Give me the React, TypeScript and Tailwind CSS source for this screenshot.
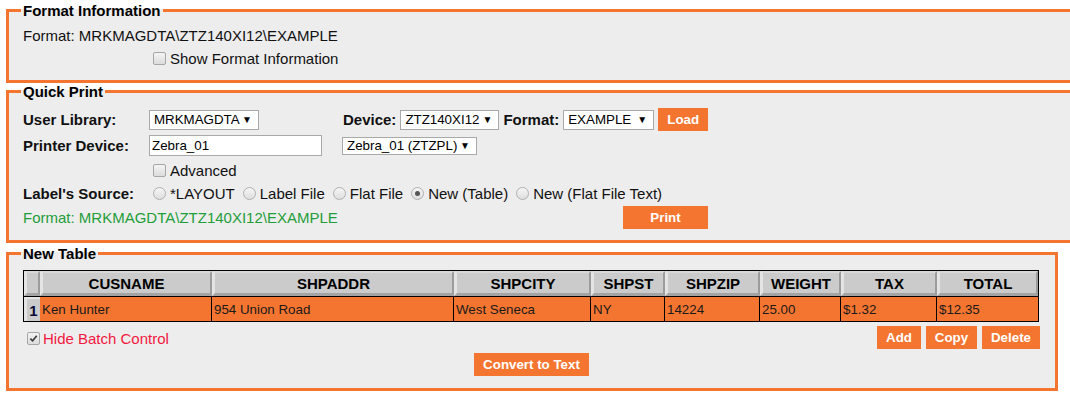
import { ReactNode } from "react";

const font = { fontFamily: '"Liberation Sans", Arial, sans-serif' };

function Box({ checked = false }: { checked?: boolean }) {
  return (
    <span className="relative inline-flex h-[13px] w-[13px] shrink-0 items-center justify-center rounded-[2px] border border-[#a6a6a6] bg-gradient-to-b from-[#f4f4f4] to-[#dcdcdc]">
      {checked && (
        <svg viewBox="0 0 10 10" className="h-[9px] w-[9px]">
          <path d="M1.5 5.2 L4 7.6 L8.6 2" fill="none" stroke="#3a3a3a" strokeWidth="1.8" />
        </svg>
      )}
    </span>
  );
}

function Radio({ checked = false }: { checked?: boolean }) {
  return (
    <span className="inline-flex h-[13px] w-[13px] shrink-0 items-center justify-center rounded-full border border-[#b0b0b0] bg-gradient-to-b from-[#f6f6f6] to-[#dedede]">
      {checked && <span className="h-[5px] w-[5px] rounded-full bg-[#555]" />}
    </span>
  );
}

function Select({ value, w, h = "h-[20px]" }: { value: string; w: string; h?: string }) {
  return (
    <span
      className={`inline-flex ${w} ${h} items-center justify-between border border-[#a9a9a9] bg-white pl-[4px] pr-[6px] text-[13.33px] text-black`}
    >
      <span>{value}</span>
      <span className="text-[10px] leading-none">▼</span>
    </span>
  );
}

function Btn({ children, w, h = "h-[23px]" }: { children: ReactNode; w: string; h?: string }) {
  return (
    <button
      className={`${w} ${h} shrink-0 bg-[#f47530] text-[13.33px] font-bold leading-none text-white`}
    >
      {children}
    </button>
  );
}

function Fieldset({ title, className, children }: { title: string; className: string; children: ReactNode }) {
  return (
    <fieldset className={`border-[3px] border-[#f47530] bg-[#ededed] pl-[14px] pr-[15px] ${className}`}>
      <legend className="-ml-[2px] px-[2px] text-[15px] font-bold leading-[17px] text-black">{title}</legend>
      {children}
    </fieldset>
  );
}

const columns = ["CUSNAME", "SHPADDR", "SHPCITY", "SHPST", "SHPZIP", "WEIGHT", "TAX", "TOTAL"];
const row = ["Ken Hunter", "954 Union Road", "West Seneca", "NY", "14224", "25.00", "$1.32", "$12.35"];

const bevel =
  "border-t-[2px] border-l-[3px] border-r-[2px] border-b-[3px] border-t-[#d8d8d8] border-l-[#e4e4e4] border-r-[#9c9c9c] border-b-[#a4a4a4] bg-[#cbcbcb]";

export default function App() {
  return (
    <div className="h-[406px] w-[1070px] overflow-hidden bg-white text-[15px] leading-[17px] text-[#111]" style={font}>
      <Fieldset title="Format Information" className="ml-[6px] mt-[2px] w-[1100px] pb-[13px] pt-[8px]">
        <div>Format: MRKMAGDTA\ZTZ140XI12\EXAMPLE</div>
        <div className="mt-[6px] flex items-center pl-[130px]">
          <Box />
          <span className="ml-[4px]">Show Format Information</span>
        </div>
      </Fieldset>

      <Fieldset title="Quick Print" className="ml-[6px] w-[1100px] pb-[11px] pt-[8px]">
        <div className="flex h-[23px] items-center">
          <span className="w-[126px] font-bold">User Library:</span>
          <span className="w-[194px]">
            <Select value="MRKMAGDTA" w="w-[110px]" />
          </span>
          <span className="font-bold">Device:</span>
          <span className="ml-[4px]">
            <Select value="ZTZ140XI12" w="w-[99px]" />
          </span>
          <span className="ml-[4px] font-bold">Format:</span>
          <span className="ml-[4px]">
            <Select value="EXAMPLE" w="w-[91px]" />
          </span>
          <span className="ml-[4px]">
            <Btn w="w-[50px]">Load</Btn>
          </span>
        </div>
        <div className="mt-[4px] flex h-[21px] items-center">
          <span className="w-[126px] font-bold">Printer Device:</span>
          <span className="w-[193px]">
            <span className="flex h-[21px] w-[173px] items-center border border-[#a9a9a9] bg-white pl-[2px] text-[13.33px] text-black">
              Zebra_01
            </span>
          </span>
          <Select value="Zebra_01 (ZTZPL)" w="w-[135px]" h="h-[18px]" />
        </div>
        <div className="mt-[6px] flex h-[17px] items-center pl-[130px]">
          <Box />
          <span className="ml-[4px]">Advanced</span>
        </div>
        <div className="mt-[6px] flex h-[17px] items-center">
          <span className="w-[130px] font-bold">Label's Source:</span>
          <div className="flex items-center gap-[8px]">
            {["*LAYOUT", "Label File", "Flat File", "New (Table)", "New (Flat File Text)"].map((l) => (
              <span key={l} className="flex items-center">
                <Radio checked={l === "New (Table)"} />
                <span className="ml-[4px]">{l}</span>
              </span>
            ))}
          </div>
        </div>
        <div className="mt-[4px] flex h-[23px] items-center">
          <span className="w-[600px] text-[#1f9e3a]">Format: MRKMAGDTA\ZTZ140XI12\EXAMPLE</span>
          <Btn w="w-[85px]">Print</Btn>
        </div>
      </Fieldset>

      <Fieldset title="New Table" className="ml-[6px] mt-[2px] w-[1052px] pb-[12px] pt-[8px]">
        <div className="w-[1016px] border border-black">
          <div className="grid grid-cols-[16px_172px_242px_137px_74px_95px_81px_96px_101px]">
            <div className={`h-[25px] ${bevel}`} />
            {columns.map((c) => (
              <div
                key={c}
                className={`flex h-[25px] items-center justify-center text-[15px] font-bold text-black ${bevel}`}
              >
                {c}
              </div>
            ))}
            <div className="col-span-9 h-px bg-black" />
            <div className="flex h-[24px] items-center justify-center border-l-[3px] border-t-[2px] border-l-[#e4e4e4] border-t-[#e4e4e4] bg-[#cbcbcb] text-[15px] font-bold text-[#0a0a3a]">
              1
            </div>
            {row.map((v, i) => (
              <div
                key={i}
                className={`flex h-[24px] items-center bg-[#f47530] pl-[2px] text-[13.33px] text-[#1a1a1a] ${
                  i < row.length - 1 ? "border-r border-black" : ""
                }`}
              >
                {v}
              </div>
            ))}
          </div>
        </div>
        <div className="mt-[4px] flex h-[23px] items-center justify-between">
          <div className="flex items-center pl-[4px] pt-[2px]">
            <Box checked />
            <span className="ml-[3px] text-[#f2183f]">Hide Batch Control</span>
          </div>
          <div className="flex gap-[5px]">
            <Btn w="w-[44px]">Add</Btn>
            <Btn w="w-[51px]">Copy</Btn>
            <Btn w="w-[58px]">Delete</Btn>
          </div>
        </div>
        <div className="mt-[4px] flex justify-center">
          <Btn w="w-[115px]">Convert to Text</Btn>
        </div>
      </Fieldset>
    </div>
  );
}
